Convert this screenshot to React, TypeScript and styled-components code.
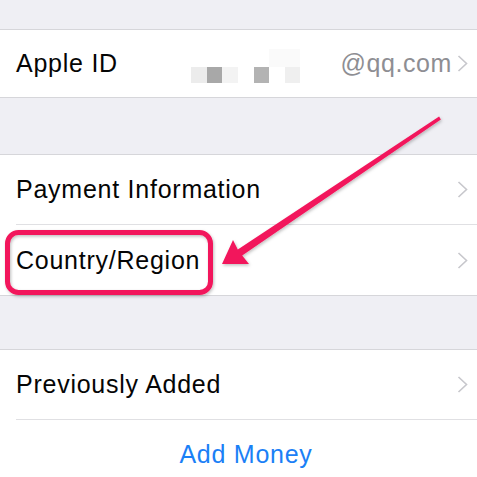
import React from "react";
import styled, { createGlobalStyle } from "styled-components";

const Global = createGlobalStyle`
  html, body { margin: 0; padding: 0; background: #efeff4; overflow: hidden; }
  body { font-family: "Liberation Sans", Arial, sans-serif; }
`;

const Page = styled.div`
  position: relative;
  width: 477px;
  height: 477px;
  overflow: hidden;
  background: #efeff4;
  display: flex;
  flex-direction: column;
`;

const Gap = styled.div<{ $h: number }>`
  height: ${(p) => p.$h}px;
  flex: none;
`;

const Group = styled.div`
  flex: none;
  background: #fff;
  border-top: 1px solid #d6d6da;
  border-bottom: 1px solid #d6d6da;
`;

const Row = styled.div<{ $h?: number; $sep?: boolean; $center?: boolean }>`
  position: relative;
  height: ${(p) => p.$h ?? 69}px;
  display: flex;
  align-items: center;
  justify-content: ${(p) => (p.$center ? "center" : "flex-start")};
  padding: 0 9px 0 16px;
  box-sizing: content-box;
  border-bottom: ${(p) => (p.$sep ? "1px solid transparent" : "none")};
  ${(p) =>
    p.$sep &&
    `&::after {
      content: "";
      position: absolute;
      left: 16px;
      right: 0;
      bottom: -1px;
      height: 1px;
      background: #e0e0e3;
    }`}
`;

const Label = styled.span`
  font-size: 25px;
  letter-spacing: 0.75px;
  color: #050505;
  flex: 1;
`;

const Action = styled.span`
  font-size: 25px;
  letter-spacing: 0.75px;
  color: #1b80f6;
  margin-left: 8px;
`;

const Value = styled.span`
  font-size: 25px;
  letter-spacing: 0.6px;
  color: #8e8e93;
  margin-right: 5px;
`;

const Mosaic = styled.div`
  display: grid;
  grid-template-columns: repeat(7, 15.6px);
  grid-template-rows: 18px 16px;
  margin-right: 40px;
  margin-top: 4px;
`;

const Tile = styled.div<{ $c: string }>`
  background: ${(p) => p.$c};
`;

const ChevronBox = styled.svg`
  flex: none;
  width: 11px;
  height: 17px;
`;

const Overlay = styled.svg`
  position: absolute;
  left: 0;
  top: 0;
  pointer-events: none;
`;

const Chevron = () => (
  <ChevronBox viewBox="0 0 11 17">
    <polyline points="1.5,1 9.5,8.5 1.5,16" fill="none" stroke="#c7c7cc" strokeWidth="1.6" />
  </ChevronBox>
);

const tiles: (string | null)[] = [
  null, null, null, null, null, "#fafafa", "#fafafa",
  "#ececec", "#a8a8a8", "#f3f3f3", null, "#b3b3b3", null, "#efefef",
];

export default function App() {
  return (
    <Page>
      <Global />
      <Gap $h={29} />
      <Group>
        <Row $h={67}>
          <Label>Apple ID</Label>
          <Mosaic>
            {tiles.map((c, i) => (
              <Tile key={i} $c={c ?? "transparent"} />
            ))}
          </Mosaic>
          <Value>@qq.com</Value>
          <Chevron />
        </Row>
      </Group>
      <Gap $h={56} />
      <Group>
        <Row $sep>
          <Label>Payment Information</Label>
          <Chevron />
        </Row>
        <Row $h={70}>
          <Label>Country/Region</Label>
          <Chevron />
        </Row>
      </Group>
      <Gap $h={53} />
      <Group>
        <Row $sep>
          <Label>Previously Added</Label>
          <Chevron />
        </Row>
        <Row $center>
          <Action>Add Money</Action>
        </Row>
      </Group>

      <Overlay width="477" height="477" viewBox="0 0 477 477">
        <defs>
          <filter id="sh" x="-10%" y="-10%" width="130%" height="130%">
            <feDropShadow dx="1" dy="1.5" stdDeviation="1.5" floodColor="#000" floodOpacity="0.25" />
          </filter>
        </defs>
        <rect x="7.5" y="232.5" width="203" height="60" rx="11" ry="11" fill="none" stroke="#f2195c" strokeWidth="5" filter="url(#sh)" />
        <polygon
          points="222,264 249,264 242.2,255.6 440.9,119.4 439.1,116.6 237.8,249.4 233,240"
          fill="#f2195c"
          filter="url(#sh)"
        />
      </Overlay>
    </Page>
  );
}
